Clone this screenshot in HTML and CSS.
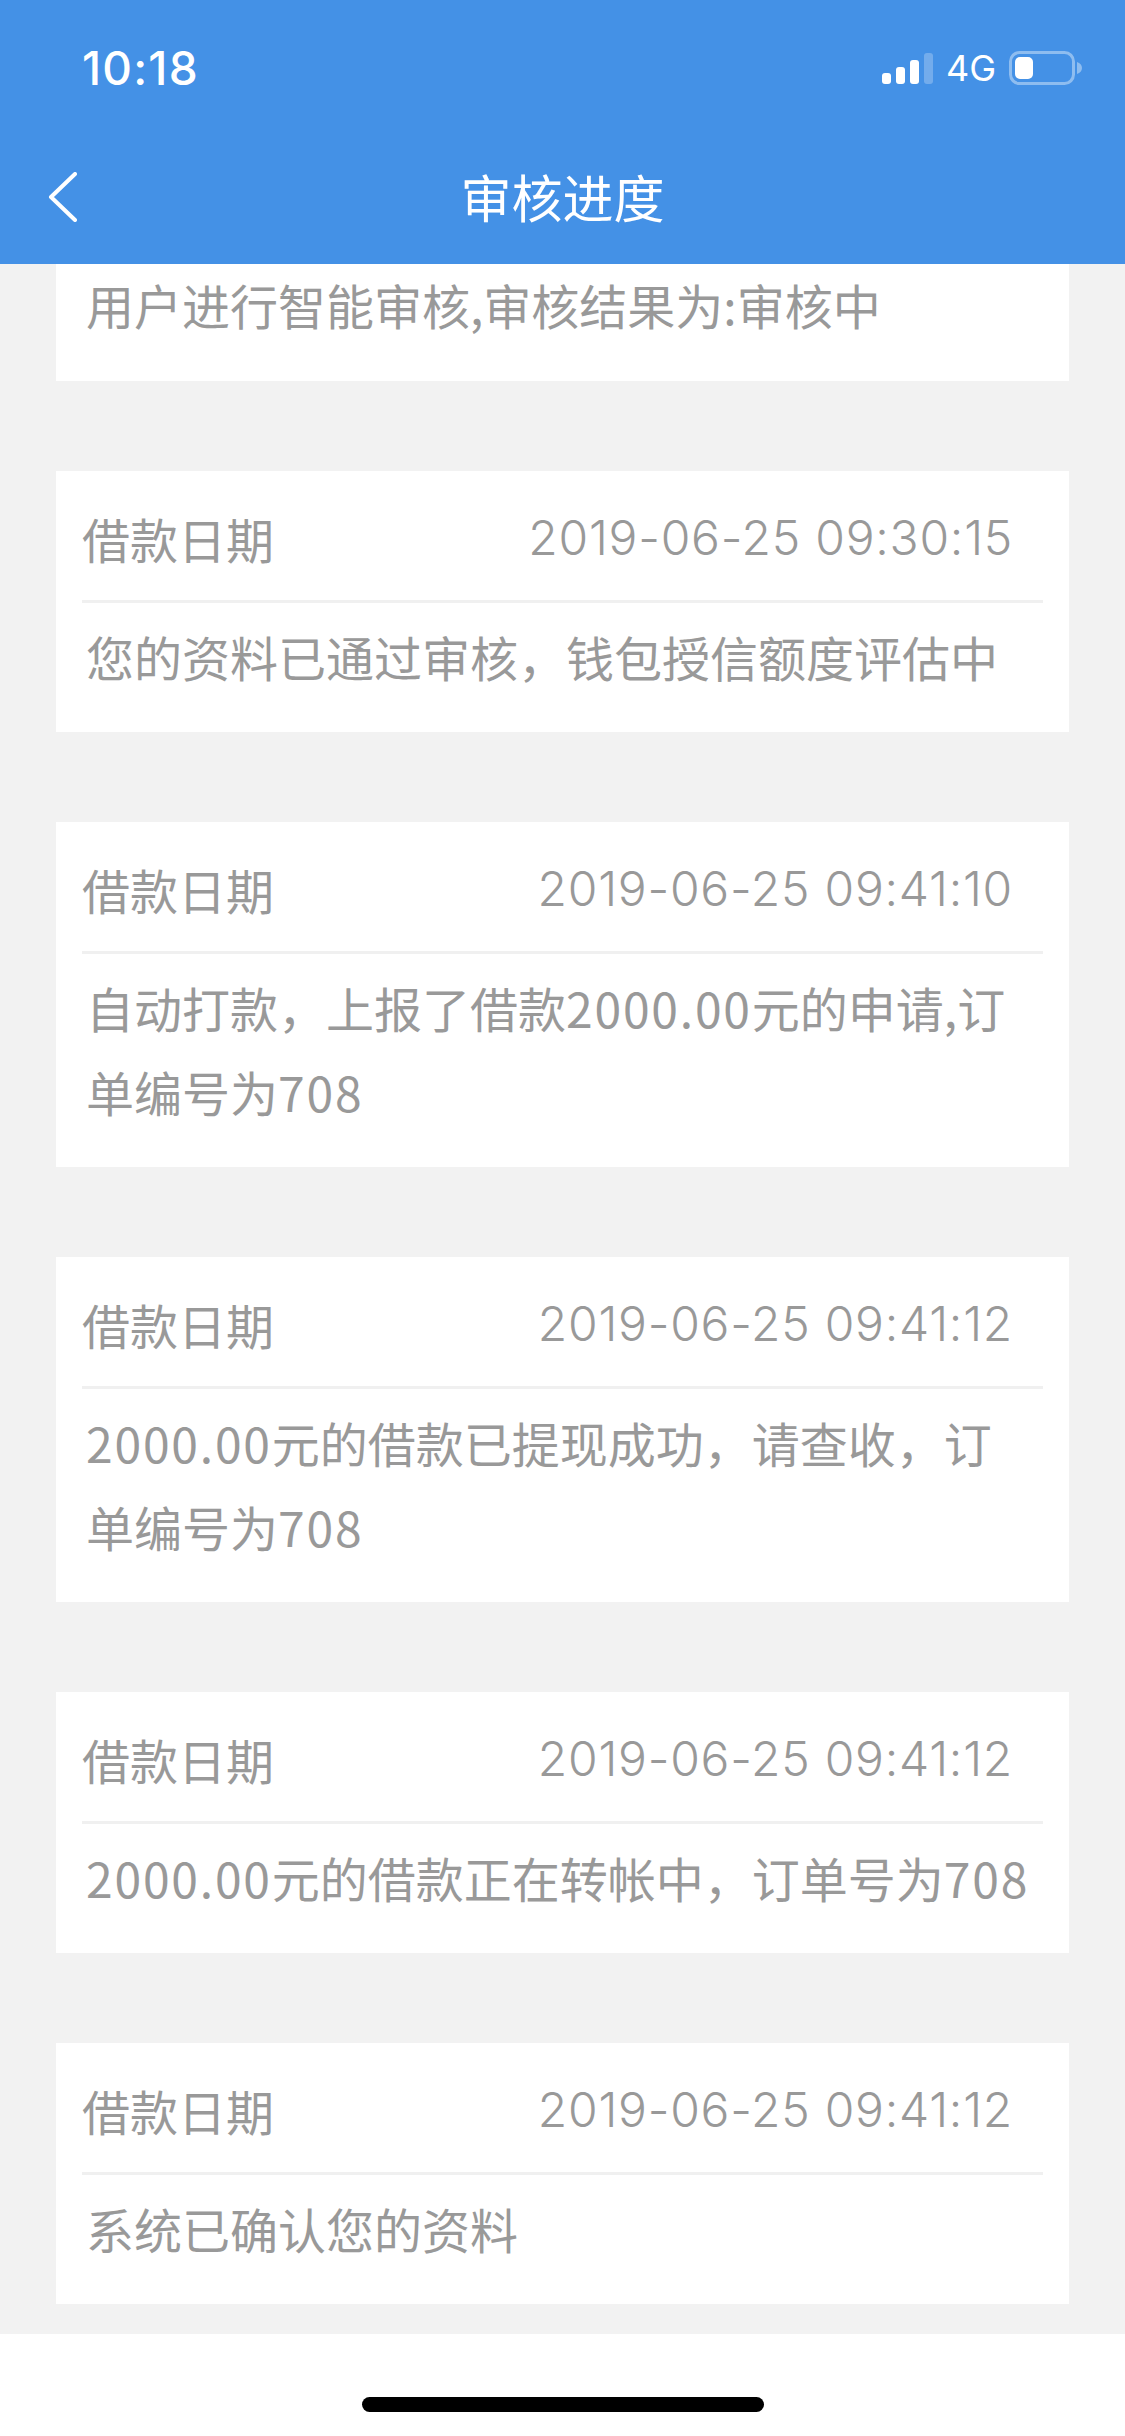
FILE: index.html
```html
<!DOCTYPE html>
<html lang="zh-CN">
<head>
<meta charset="utf-8">
<title>审核进度</title>
<link rel="stylesheet" href="styles.css">
</head>
<body>
<div class="screen">
  <header class="app-header">
    <div class="status-bar">
      <span class="clock">10:18</span>
      <div class="status-icons">
        <svg class="signal" width="51" height="31" viewBox="0 0 51 31">
          <rect x="0" y="20" width="9" height="11" rx="3" fill="#fff"/>
          <rect x="14" y="14" width="9" height="17" rx="3" fill="#fff"/>
          <rect x="28" y="7" width="9" height="24" rx="3" fill="#fff"/>
          <rect x="42" y="0" width="9" height="31" rx="3" fill="#fff" fill-opacity=".25"/>
        </svg>
        <span class="network">4G</span>
        <svg class="battery" width="73" height="34" viewBox="0 0 73 34">
          <rect x="1.5" y="1.5" width="63" height="31" rx="9" fill="none" stroke="#fff" stroke-opacity=".4" stroke-width="3"/>
          <rect x="6" y="6" width="18" height="22" rx="5" fill="#fff"/>
          <path d="M68 11c3 1 5 3 5 6s-2 5-5 6z" fill="#fff" fill-opacity=".4"/>
        </svg>
      </div>
    </div>
    <nav class="nav-bar">
      <svg class="back" width="29" height="50" viewBox="0 0 29 50">
        <path d="M27 2 3 25l24 23" fill="none" stroke="#fff" stroke-width="4" stroke-linecap="round" stroke-linejoin="round"/>
      </svg>
      <h1 class="title">审核进度</h1>
      <span></span>
    </nav>
  </header>

  <main class="list">
    <section class="card">
      <p class="card-body card-body-clipped">用户进行智能审核,审核结果为:审核中</p>
    </section>

    <section class="card">
      <div class="card-head"><span>借款日期</span><time class="date">2019-06-25 09:30:15</time></div>
      <p class="card-body">您的资料已通过审核，钱包授信额度评估中</p>
    </section>

    <section class="card">
      <div class="card-head"><span>借款日期</span><time class="date">2019-06-25 09:41:10</time></div>
      <p class="card-body">自动打款，上报了借款<span class="num">2000.00</span>元的申请,订<br>单编号为<span class="num">708</span></p>
    </section>

    <section class="card">
      <div class="card-head"><span>借款日期</span><time class="date">2019-06-25 09:41:12</time></div>
      <p class="card-body"><span class="num">2000.00</span>元的借款已提现成功，请查收，订<br>单编号为<span class="num">708</span></p>
    </section>

    <section class="card">
      <div class="card-head"><span>借款日期</span><time class="date">2019-06-25 09:41:12</time></div>
      <p class="card-body"><span class="num">2000.00</span>元的借款正在转帐中，订单号为<span class="num">708</span></p>
    </section>

    <section class="card">
      <div class="card-head"><span>借款日期</span><time class="date">2019-06-25 09:41:12</time></div>
      <p class="card-body">系统已确认您的资料</p>
    </section>
  </main>

  <footer class="home-area"><span class="home-bar"></span></footer>
</div>
</body>
</html>
```

FILE: styles.css
```css
* { box-sizing: border-box; }

html, body {
  margin: 0;
  padding: 0;
  background: #fff;
}

.screen {
  width: 1125px;
  height: 2436px;
  display: flex;
  flex-direction: column;
  overflow: hidden;
  font-family: "Noto Sans CJK SC", "Liberation Sans", sans-serif;
}

.app-header {
  flex: none;
  height: 264px;
  background: #4491e6;
  color: #fff;
}

.status-bar {
  height: 136px;
  display: flex;
  align-items: center;
  justify-content: space-between;
  padding: 0 43px 0 82px;
}

.clock {
  font-family: Inter, "Liberation Sans", sans-serif;
  font-size: 46px;
  font-weight: 500;
  letter-spacing: 1.2px;
}

.status-icons {
  display: flex;
  align-items: center;
}

.network {
  margin: 0 13px 0 13px;
  font-family: Inter, "Liberation Sans", sans-serif;
  font-size: 36px;
  line-height: 1;
}

.nav-bar {
  height: 128px;
  padding: 0 48px 6px;
  display: grid;
  grid-template-columns: 1fr auto 1fr;
  align-items: center;
}

.title {
  margin: 0;
  font-size: 51px;
  font-weight: 400;
  line-height: 1.2;
}

.list {
  flex: 1;
  min-height: 0;
  padding: 0 56px;
  display: flex;
  flex-direction: column;
  gap: 90px;
  background: #f2f2f2;
}

.card {
  background: #fff;
  color: #999;
  font-size: 48px;
}

.card-head {
  height: 132px;
  margin: 0 26px;
  padding: 5px 31px 0 0;
  display: flex;
  align-items: center;
  justify-content: space-between;
  border-bottom: 3px solid #f0f0f0;
  line-height: 1;
}

.date {
  font-family: Inter, "Liberation Sans", sans-serif;
  font-size: 48px;
  font-weight: 300;
  letter-spacing: 0.75px;
  margin-right: -1px;
}

.card-body {
  margin: 0;
  padding: 11px 36px 34px 30px;
  line-height: 84px;
}

.card-body-clipped {
  padding-top: 0;
  padding-bottom: 37px;
  line-height: 80px;
}

.num {
  letter-spacing: 1.8px;
}

.home-area {
  flex: none;
  height: 102px;
  padding-top: 63px;
  background: #fff;
  display: flex;
  justify-content: center;
  align-items: flex-start;
}

.home-bar {
  width: 402px;
  height: 15px;
  border-radius: 8px;
  background: #000;
}
```
